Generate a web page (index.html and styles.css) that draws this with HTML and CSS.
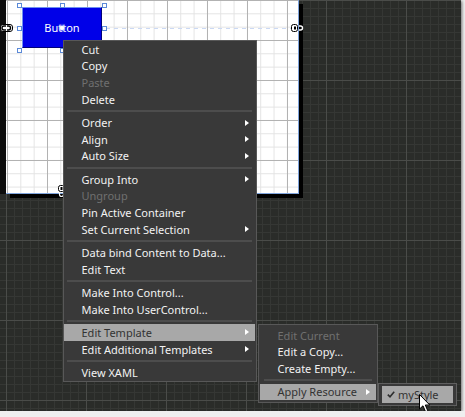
FILE: index.html
```html
<!DOCTYPE html>
<html lang="en">
<head>
    <meta charset="UTF-8">
    <title>Blend - Button context menu</title>
    <link rel="stylesheet" href="styles.css">
</head>
<body>
    <div class="screen">
        <div class="artboard">
            <div class="guide"></div>
            <div class="btn">Button</div>
            <span class="center-dot"></span>
            <span class="handle h-tl"></span>
            <span class="handle h-tc"></span>
            <span class="handle h-tr"></span>
            <span class="handle h-ml"></span>
            <span class="handle h-mr"></span>
            <span class="handle h-bl"></span>
            <span class="handle h-bc"></span>
        </div>

        <!-- margin adorners -->
        <svg class="pin pin-left" width="13" height="8" viewBox="0 0 13 8">
            <rect x="0.5" y="0.5" width="12" height="7" rx="2.5" fill="#fff" stroke="#000"/>
            <path d="M6 2 H4 a2 2 0 0 0 0 4 H6" fill="none" stroke="#000" stroke-width="1.4"/>
            <path d="M7 2 h1.5 a2 2 0 0 1 0 4 H7" fill="none" stroke="#000" stroke-width="1.4"/>
        </svg>
        <svg class="pin pin-right" width="13" height="8" viewBox="0 0 13 8">
            <rect x="0.5" y="0.5" width="6" height="7" rx="2" fill="#fff" stroke="#000"/>
            <rect x="3" y="2.5" width="2" height="3" fill="#000"/>
            <path d="M8 2 h1.5 a2 2 0 0 1 0 4 H8" fill="none" stroke="#fff" stroke-width="1.4"/>
        </svg>
        <svg class="pin pin-bottom" width="7" height="12" viewBox="0 0 7 12">
            <rect x="0.5" y="0.5" width="6" height="6" rx="2" fill="#fff" stroke="#000"/>
            <rect x="2.5" y="2" width="2" height="3" fill="#000"/>
            <path d="M1.5 8 v1.5 a2 2 0 0 0 4 0 V8" fill="none" stroke="#fff" stroke-width="1.2"/>
        </svg>

        <ul class="menu main-menu">
            <li class="item">Cut</li>
            <li class="item">Copy</li>
            <li class="item disabled">Paste</li>
            <li class="item">Delete</li>
            <li class="sep"></li>
            <li class="item">Order<i class="arrow"></i></li>
            <li class="item">Align<i class="arrow"></i></li>
            <li class="item">Auto Size<i class="arrow"></i></li>
            <li class="sep"></li>
            <li class="item">Group Into<i class="arrow"></i></li>
            <li class="item disabled">Ungroup</li>
            <li class="item">Pin Active Container</li>
            <li class="item">Set Current Selection<i class="arrow"></i></li>
            <li class="sep"></li>
            <li class="item">Data bind Content to Data...</li>
            <li class="item">Edit Text</li>
            <li class="sep"></li>
            <li class="item">Make Into Control...</li>
            <li class="item">Make Into UserControl...</li>
            <li class="sep"></li>
            <li class="item active">Edit Template<i class="arrow"></i></li>
            <li class="item">Edit Additional Templates<i class="arrow"></i></li>
            <li class="sep"></li>
            <li class="item">View XAML</li>
        </ul>

        <ul class="menu sub-menu">
            <li class="item disabled">Edit Current</li>
            <li class="item">Edit a Copy...</li>
            <li class="item">Create Empty...</li>
            <li class="sep"></li>
            <li class="item active">Apply Resource<i class="arrow"></i></li>
        </ul>

        <ul class="menu style-menu">
            <li class="item active checked">
                <svg class="check" width="8" height="7" viewBox="0 0 8 7">
                    <path d="M0.8 3.6 L3 5.8 L7.2 0.8" fill="none" stroke="#2e2e2e" stroke-width="1.6"/>
                </svg>myStyle
            </li>
        </ul>

        <svg class="cursor" width="12" height="19" viewBox="0 0 12 19">
            <path d="M0.5 0.5 V15 L4 11.8 L6.6 17.8 L8.8 16.8 L6.3 11 H10.8 Z" fill="#fff" stroke="#000" stroke-width="1" stroke-linejoin="round"/>
        </svg>
    </div>
</body>
</html>
```

FILE: styles.css
```css
body {
    margin: 0;
    background-color: #efefef;
    font-family: 'Noto Sans', 'Open Sans', sans-serif;
}
.screen {
    position: relative;
    width: 461px;
    height: 411px;
    overflow: hidden;
    background-color: #2a2c29;
    background-image:
        linear-gradient(to right, #4a4c49 1px, transparent 1px),
        linear-gradient(to bottom, #4a4c49 1px, transparent 1px),
        linear-gradient(to right, #353734 1px, transparent 1px),
        linear-gradient(to bottom, #353734 1px, transparent 1px);
    background-size: 80px 80px, 80px 80px, 8px 8px, 8px 8px;
    background-position: 6px 0, 0 0, 6px 0, 0 0;
    box-shadow: 1px 1px 3px rgba(0, 0, 0, 0.55);
}

/* artboard */
.artboard {
    position: absolute;
    left: 6px;
    top: 0;
    width: 293px;
    height: 194px;
    box-sizing: border-box;
    border-right: 1px solid #7fa4dc;
    border-bottom: 1px solid #7fa4dc;
    background-color: #fff;
    background-image:
        linear-gradient(to right, #b2b2b2 1px, transparent 1px),
        linear-gradient(to bottom, #b2b2b2 1px, transparent 1px),
        linear-gradient(to right, #e3e3e3 1px, transparent 1px),
        linear-gradient(to bottom, #e3e3e3 1px, transparent 1px);
    background-size: 40px 40px, 40px 40px, 13.333px 13.333px, 13.333px 13.333px;
    background-position: 1px 0, 0 0, 1px 0, 0 0;
    box-shadow: 4px 4px 0 #000, -6px 0 0 #0c0c0c;
}
.guide {
    position: absolute;
    left: 100px;
    top: 28px;
    width: 186px;
    height: 1px;
    background: repeating-linear-gradient(to right, #cbd9f4 0 4px, transparent 4px 8px);
}
.btn {
    position: absolute;
    left: 16px;
    top: 7px;
    width: 80px;
    height: 41px;
    box-sizing: border-box;
    border: 1px solid #6f8ff0;
    border-right-color: #00007a;
    border-bottom-color: #00007a;
    background-color: #0000e8;
    color: #fff;
    font-size: 11px;
    display: flex;
    align-items: center;
    justify-content: center;
}
.center-dot {
    position: absolute;
    left: 54px;
    top: 26px;
    width: 4px;
    height: 4px;
    border-radius: 50%;
    background-color: #fff;
    box-shadow: 0 0 2px 1px rgba(200, 220, 255, 0.9);
}
.handle {
    position: absolute;
    width: 5px;
    height: 5px;
    box-sizing: border-box;
    border: 1px solid #5b8ad8;
    background-color: #fff;
}
.h-tl { left: 11px; top: 3px; }
.h-tc { left: 54px; top: 3px; }
.h-tr { left: 96px; top: 3px; }
.h-ml { left: 11px; top: 26px; }
.h-mr { left: 96px; top: 26px; }
.h-bl { left: 11px; top: 48px; }
.h-bc { left: 54px; top: 48px; }

.pin {
    position: absolute;
}
.pin-left { left: 0; top: 24px; }
.pin-right { left: 291px; top: 24px; }
.pin-bottom { left: 58px; top: 185px; }

/* menus */
.menu {
    position: absolute;
    margin: 0;
    list-style: none;
    box-sizing: border-box;
    background-color: #393939;
    border: 1px solid #585858;
    font-size: 11px;
    color: #f2f2f2;
}
.main-menu {
    left: 63px;
    top: 40px;
    width: 194px;
    padding: 0 1px 0 0;
}
.sub-menu {
    left: 258px;
    top: 324px;
    width: 120px;
    padding: 2px 1px;
}
.style-menu {
    left: 378px;
    top: 383px;
    width: 79px;
    padding: 2px 3px;
    border-color: #5f5f5f;
}
.item {
    display: flex;
    align-items: center;
    height: 16.67px;
    padding-left: 17.5px;
    white-space: nowrap;
}
.item.disabled {
    color: #707070;
}
.item.active {
    background-color: #a8a8a8;
    color: #333;
}
.item.checked {
    padding-left: 5px;
    height: 17.3px;
}
.check {
    margin-right: 3px;
}
.arrow {
    margin-left: auto;
    margin-right: 6px;
    width: 0;
    height: 0;
    border-left: 4px solid #fff;
    border-top: 3.5px solid transparent;
    border-bottom: 3.5px solid transparent;
}
.sep {
    height: 2px;
    margin: 2.33px 3px;
    background-color: #4d4d4d;
}
.sub-menu .sep {
    margin: 2.33px 4px;
}
.cursor {
    position: absolute;
    left: 419px;
    top: 394px;
}
```
